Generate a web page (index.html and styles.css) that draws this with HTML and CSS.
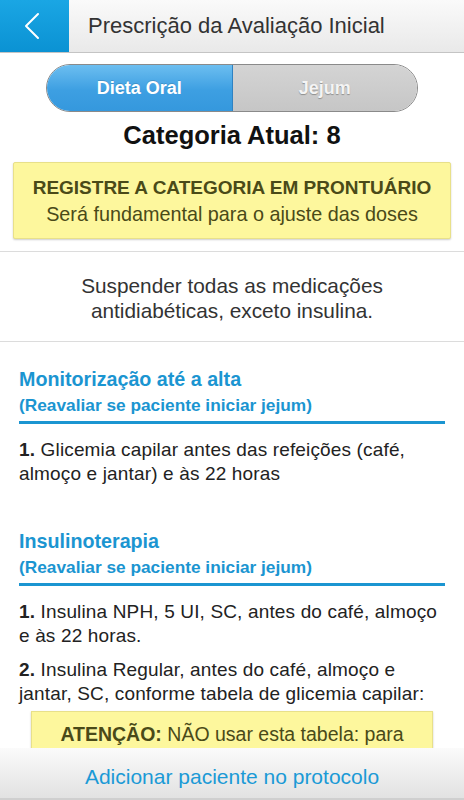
FILE: index.html
```html
<!doctype html>
<html lang="pt">
<head>
<meta charset="utf-8">
<meta name="viewport" content="width=device-width, initial-scale=1">
<title>Prescrição da Avaliação Inicial</title>
<link rel="stylesheet" href="styles.css">
</head>
<body>
<div class="screen">
<header class="topbar">
  <a class="back" href="#" aria-label="Voltar">
    <svg width="18" height="28" viewBox="0 0 18 28"><path d="M15 2 L3 14 L15 26" fill="none" stroke="#fff" stroke-width="2" stroke-linecap="round" stroke-linejoin="round"/></svg>
  </a>
  <h1>Prescrição da Avaliação Inicial</h1>
</header>

<main class="content">
  <div class="segment">
    <span class="seg on">Dieta Oral</span>
    <span class="seg off">Jejum</span>
  </div>
  <p class="category">Categoria Atual: 8</p>

  <div class="note">
    <strong>REGISTRE A CATEGORIA EM PRONTUÁRIO</strong>
    <span>Será fundamental para o ajuste das doses</span>
  </div>

  <p class="suspend">Suspender todas as medicações<br>antidiabéticas, exceto insulina.</p>

  <section class="block">
    <h2>Monitorização até a alta</h2>
    <h3>(Reavaliar se paciente iniciar jejum)</h3>
    <p class="item"><b>1.</b> Glicemia capilar antes das refeições (café,<br>almoço e jantar) e às 22 horas</p>
  </section>

  <section class="block">
    <h2>Insulinoterapia</h2>
    <h3>(Reavaliar se paciente iniciar jejum)</h3>
    <p class="item"><b>1.</b> Insulina NPH, 5 UI, SC, antes do café, almoço<br>e às 22 horas.</p>
    <p class="item"><b>2.</b> Insulina Regular, antes do café, almoço e<br>jantar, SC, conforme tabela de glicemia capilar:</p>
    <div class="warn"><b>ATENÇÃO:</b> NÃO usar esta tabela: para pacientes em uso de bomba de insulina</div>
  </section>
</main>

<footer class="bottombar">
  <a href="#">Adicionar paciente no protocolo</a>
</footer>
</div>
</body>
</html>
```

FILE: styles.css
```css
html, body { margin: 0; padding: 0; background: #fff; font-family: "Liberation Sans", Arial, sans-serif; color: #222; }
.screen { width: 464px; height: 800px; display: flex; flex-direction: column; overflow: hidden; }

.topbar { height: 52px; flex: none; display: flex; align-items: center; background: linear-gradient(#fafafa, #e9e9e9); border-bottom: 1px solid #c4c4c4; }
.back { width: 69px; height: 52px; display: flex; align-items: center; justify-content: center; background: linear-gradient(#1aa6e4, #0b92d3); }
.back svg { margin-right: 6px; }
.topbar h1 { margin: 0 0 0 19px; font-size: 22px; font-weight: 400; color: #333; }

.content { flex: 1; overflow: hidden; }

.segment { display: flex; width: 370px; height: 46px; margin: 11px auto 0; border: 1px solid #8a8a8a; border-radius: 24px; overflow: hidden; }
.seg { flex: 1; display: flex; align-items: center; justify-content: center; font-size: 18px; font-weight: 700; color: #fff; }
.seg.on { background: linear-gradient(#6cbef0, #3d9fe2 55%, #3598dd); border-right: 1px solid #2f82c2; text-shadow: 0 -1px 0 rgba(0,0,0,0.15); }
.seg.off { background: linear-gradient(#d4d4d4, #c6c6c6); color: #f4f4f4; text-shadow: 0 1px 1px rgba(0,0,0,0.3); }

.category { margin: 8px 0 0; text-align: center; font-size: 25.5px; font-weight: 700; color: #111; line-height: 30px; }

.note { margin: 12px 13px 0; padding: 12px 0 11px; display: flex; flex-direction: column; align-items: center; background: #fdf79d; border: 1px solid #e8e08a; border-radius: 2px; box-shadow: 0 1px 2px rgba(0,0,0,0.2); color: #4a4a18; font-size: 19.8px; line-height: 26px; }
.note strong { font-size: 19px; font-weight: 700; }

.suspend { margin: 12px 0 0; padding: 21px 0 18px; border-top: 1px solid #dcdcdc; border-bottom: 1px solid #dcdcdc; text-align: center; font-size: 20.8px; line-height: 25px; color: #333; }

.block { padding: 24px 19px 0; }
.block h2 { margin: 0; font-size: 19.7px; font-weight: 700; color: #1b95d1; line-height: 26px; }
.block h3 { margin: 0; font-size: 17.3px; font-weight: 700; color: #1b95d1; line-height: 26px; padding-bottom: 3px; border-bottom: 3px solid #1b95d1; }
.item { margin: 14px -10px 0 0; font-size: 19px; letter-spacing: 0.15px; line-height: 24px; color: #222; white-space: nowrap; }
.item + .item { margin-top: 10px; }
.block + .block { padding-top: 42px; }

.warn { margin: 5px 12px 0; padding: 10px 10px; background: #fdf79d; border: 1px solid #e8e08a; box-shadow: 0 1px 2px rgba(0,0,0,0.2); text-align: center; font-size: 19.5px; line-height: 24px; color: #4a4a18; }

.bottombar { height: 52px; flex: none; display: flex; align-items: center; justify-content: center; padding-top: 8px; background: linear-gradient(#fbfbfb, #e2e2e2); border-bottom: 2px solid #cfcfcf; box-sizing: border-box; }
.bottombar a { color: #1b9ad6; font-size: 21px; text-decoration: none; }
```
